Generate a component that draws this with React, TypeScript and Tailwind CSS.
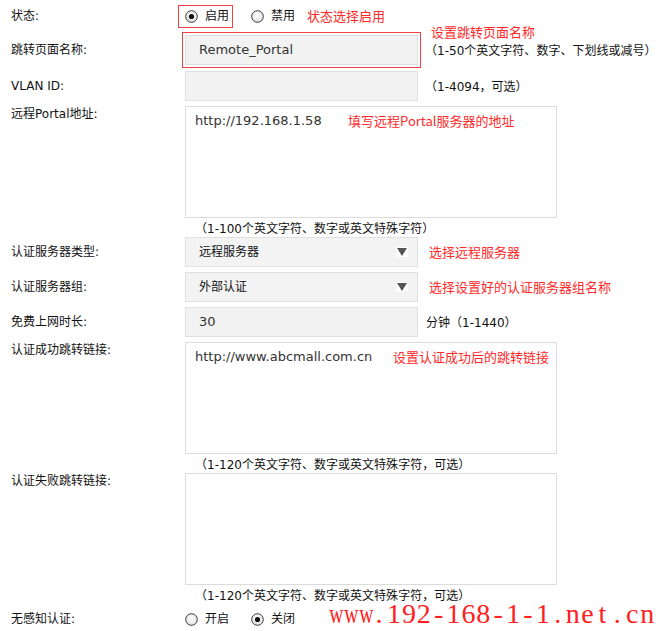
import React from 'react';

const Radio = ({ checked }: { checked?: boolean }) => (
  <svg width="13" height="13" viewBox="0 0 13 13" className="shrink-0">
    <defs>
      <radialGradient id="rg" cx="50%" cy="40%" r="60%">
        <stop offset="0%" stopColor="#ffffff" />
        <stop offset="100%" stopColor="#e2e2e2" />
      </radialGradient>
    </defs>
    <circle cx="6.5" cy="6.5" r="5.8" fill="url(#rg)" stroke="#3a3a3a" strokeWidth="1" />
    {checked && <circle cx="6.5" cy="6.5" r="2.6" fill="#111" />}
  </svg>
);

const Arrow = () => (
  <span className="flex items-center justify-center w-[12px] h-[10px] bg-white">
    <svg width="10" height="8" viewBox="0 0 10 8">
      <path d="M0 0H10L5 8Z" fill="#555" />
    </svg>
  </span>
);

// full-width punctuation goes to the CJK font so it keeps its full cell
const fw = (text: string) =>
  text.split('').map((ch, i) =>
    '（），、'.includes(ch) ? (
      <span key={i} className="font-['Noto_Sans_CJK_SC',sans-serif]">{ch}</span>
    ) : (
      ch
    )
  );

const Label = ({ children, top }: { children: React.ReactNode; top?: boolean }) => (
  <div className={`w-[185px] shrink-0 pl-[11px] leading-[16px] ${top ? 'self-start' : ''}`}>{children}</div>
);

const Hint = ({ text }: { text: string }) => (
  <div className="h-[19px] pl-[195px] pt-[1px] leading-[17px] whitespace-nowrap">{fw(text)}</div>
);

const mark = 'www.192-168-1-1.net.cn';

export default function App() {
  const note = "text-[13px] text-[#ff2a2a] font-['Noto_Sans_CJK_SC',sans-serif] leading-[18px] whitespace-nowrap";
  const field = 'w-[233px] h-[30px] shrink-0 border border-[#e0e0e0] bg-[#f2f2f2] pl-[13px] flex items-center text-[13px] text-[#333]';
  const area = 'relative w-[372px] h-[112px] shrink-0 border border-[#dcdcdc] bg-white pl-[9px] pt-[6px] text-[13px] text-[#333] leading-[16px]';

  return (
    <div className="relative w-[661px] h-[631px] overflow-hidden bg-white text-[12px] text-[#111] font-['DejaVu_Sans','Noto_Sans_CJK_SC',sans-serif]">
      {/* 状态 */}
      <div className="flex items-center mt-[5px] h-[22px]">
        <div className="w-[178px] shrink-0 pl-[11px] leading-[16px]">状态:</div>
        <div className="flex items-center h-[23px] w-[55px] border border-[#f04040] pl-[6px] gap-[7px]">
          <Radio checked />
          <span>启用</span>
        </div>
        <div className="flex items-center ml-[18px] gap-[7px]">
          <Radio />
          <span>禁用</span>
        </div>
        <span className={`ml-[12px] ${note}`}>状态选择启用</span>
      </div>

      {/* 跳转页面名称 */}
      <div className="flex items-center mt-[8px] h-[30px]">
        <Label>跳转页面名称:</Label>
        <div className={`${field} outline outline-offset-2 outline-[#f04040]`}>Remote_Portal</div>
        <div className="relative ml-[7px] whitespace-nowrap leading-[16px]">
          <span className={`absolute left-[6px] bottom-full mb-[1px] ${note}`}>设置跳转页面名称</span>
          {fw('（1-50个英文字符、数字、下划线或减号）')}
        </div>
      </div>

      {/* VLAN ID */}
      <div className="flex items-center mt-[6px] h-[30px]">
        <Label>VLAN ID:</Label>
        <div className={field}></div>
        <div className="ml-[7px] whitespace-nowrap">{fw('（1-4094，可选）')}</div>
      </div>

      {/* 远程Portal地址 */}
      <div className="flex mt-[5px]">
        <Label top>远程Portal地址:</Label>
        <div className={area}>
          http://192.168.1.58
          <span className={`absolute left-[162px] top-[5px] ${note}`}>填写远程Portal服务器的地址</span>
        </div>
      </div>
      <Hint text="（1-100个英文字符、数字或英文特殊字符）" />

      {/* 认证服务器类型 */}
      <div className="flex items-center h-[30px]">
        <Label>认证服务器类型:</Label>
        <div className={`${field} justify-between pr-[9px] bg-[#f3f3f3]`}>
          <span className="text-[12px] text-[#111]">远程服务器</span>
          <Arrow />
        </div>
        <span className={`ml-[11px] ${note}`}>选择远程服务器</span>
      </div>

      {/* 认证服务器组 */}
      <div className="flex items-center mt-[5px] h-[30px]">
        <Label>认证服务器组:</Label>
        <div className={`${field} justify-between pr-[9px] bg-[#f3f3f3]`}>
          <span className="text-[12px] text-[#111]">外部认证</span>
          <Arrow />
        </div>
        <span className={`ml-[11px] ${note}`}>选择设置好的认证服务器组名称</span>
      </div>

      {/* 免费上网时长 */}
      <div className="flex items-center mt-[5px] h-[30px]">
        <Label>免费上网时长:</Label>
        <div className={field}>30</div>
        <div className="ml-[8px] whitespace-nowrap">{fw('分钟（1-1440）')}</div>
      </div>

      {/* 认证成功跳转链接 */}
      <div className="flex mt-[5px]">
        <Label top>认证成功跳转链接:</Label>
        <div className={area}>
          http://www.abcmall.com.cn
          <span className={`absolute left-[207px] top-[5px] ${note}`}>设置认证成功后的跳转链接</span>
        </div>
      </div>
      <Hint text="（1-120个英文字符、数字或英文特殊字符，可选）" />

      {/* 认证失败跳转链接 */}
      <div className="flex">
        <Label top>认证失败跳转链接:</Label>
        <div className={area}></div>
      </div>
      <Hint text="（1-120个英文字符、数字或英文特殊字符，可选）" />

      {/* 无感知认证 */}
      <div className="flex items-center mt-[2px] h-[26px]">
        <Label>无感知认证:</Label>
        <div className="flex items-center gap-[7px]">
          <Radio />
          <span>开启</span>
        </div>
        <div className="flex items-center ml-[22px] gap-[7px]">
          <Radio checked />
          <span>关闭</span>
        </div>
      </div>

      {/* watermark */}
      <div className="absolute left-[327px] top-[600px] flex text-[28px] leading-[28px] text-[#ff2020] font-['Liberation_Serif',serif] whitespace-nowrap">
        {mark.split('').map((ch, i) => (
          <span key={i} className={`inline-block w-[14.9px] text-center ${ch === 'w' ? 'scale-x-70' : ''}`}>
            {ch}
          </span>
        ))}
      </div>
    </div>
  );
}
